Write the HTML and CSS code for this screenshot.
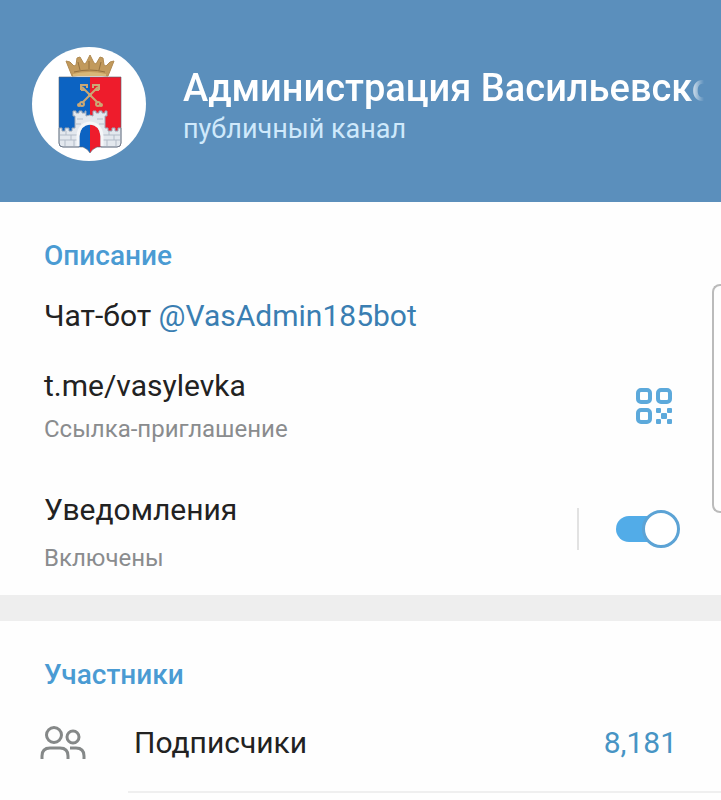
FILE: index.html
```html
<!DOCTYPE html>
<html lang="ru">
<head>
    <meta charset="UTF-8">
    <meta name="viewport" content="width=device-width, initial-scale=1.0">
    <title>Публичный канал</title>
    <link rel="stylesheet" href="styles.css">
</head>
<body>
    <header class="header">
        <svg class="avatar" viewBox="0 0 114 114" aria-hidden="true">
            <circle cx="57" cy="57" r="57" fill="#fff"/>
            <!-- crown -->
            <path d="M40 29 34 14l4 1 4 4 2-1 1-7 3-1 4 7 2-1 4-8 4 8 2 1 4-7 3 1 1 7 2 1 4-4 4-1-6 15q-18-3-36 0z" fill="#c29a5c" stroke="#b08a52" stroke-width="1"/>
            <path d="M42 25q16-4 31 0M46 15l2 8M57 14v8M69 15l-2 8" fill="none" stroke="#94713f" stroke-width="1"/>
            <path d="M41 27q16-4 33 0v2H41z" fill="#d9b878"/>
            <!-- shield -->
            <path d="M27 30h31v76q-2-4-7-6H31q-4 0-4-4z" fill="#0c63c2"/>
            <path d="M58 30h31v66q0 4-4 4H65q-5 2-7 6z" fill="#ee1c2c"/>
            <!-- crossed keys -->
            <g fill="none" stroke="#cba875" stroke-width="2">
                <path d="m50 40 16 16M66 40 50 56"/>
                <circle cx="50" cy="57" r="2"/>
                <circle cx="66" cy="57" r="2"/>
                <path d="M49 43v-5h6v3M49 43h4M67 43v-5h-6v3M67 43h-4"/>
            </g>
            <g fill="#cba875">
                <circle cx="47" cy="58" r="2"/>
                <circle cx="69" cy="58" r="2"/>
                <circle cx="58" cy="48" r="2"/>
            </g>
            <!-- castle wall with an open gate -->
            <path d="M27 81h3v3h3v-3h4v3h3v-3h3V69h-2v-5h3v2h3v-2h3v2h3v-2h1v5q4-2 7 0v-5h3v2h3v-2h3v2h3v-2h2v5h-2v12h3v3h4v-3h3v3h3v-3h3v15q0 4-4 4H69V89q-1-11-11-12-10 1-11 12v11H31q-4 0-4-4z" fill="#e3e8ee" stroke="#9aa6b6" stroke-width="1"/>
            <path d="M28 88h17M28 93h17M71 88h17M71 93h17M34 84v4M39 88v5M33 93v6M42 93v6M77 84v4M82 88v5M75 93v6M84 93v6M45 72h6M65 72h6M44 77h5M67 77h5" stroke="#b3bcc8" stroke-width="1" fill="none"/>
            <path d="M46 99V89q1-12 12-13 11 1 12 13v10" fill="none" stroke="#f5f7f9" stroke-width="3"/>
            <path d="M27 30h62v66q0 4-4 4H65q-5 2-7 6-2-4-7-6H31q-4 0-4-4z" fill="none" stroke="#59606f" stroke-width="1" opacity="0.6"/>
        </svg>
        <div class="title-block">
            <h1 class="title">Администрация Васильевско</h1>
            <p class="subtitle">публичный канал</p>
        </div>
    </header>
    <main>
        <section class="section">
            <h2 class="section-title">Описание</h2>
            <p class="text">Чат-бот <a class="mention" href="#bot">@VasAdmin185bot</a></p>
            <div class="row">
                <div class="row-body">
                    <a class="text" href="#invite">t.me/vasylevka</a>
                    <span class="hint">Ссылка-приглашение</span>
                </div>
                <button class="qr-button" type="button" aria-label="QR-код">
                    <svg width="36" height="36" viewBox="0 0 36 36">
                        <g fill="none" stroke="#5ca9db" stroke-width="4">
                            <rect x="2" y="2" width="12" height="12" rx="3"/>
                            <rect x="22" y="2" width="12" height="12" rx="3"/>
                            <rect x="2" y="22" width="12" height="12" rx="3"/>
                        </g>
                        <g fill="#5ca9db">
                            <rect x="20" y="20" width="5" height="5" rx="1"/>
                            <rect x="31" y="20" width="5" height="5" rx="1"/>
                            <rect x="25" y="25" width="6" height="6" rx="1"/>
                            <rect x="20" y="31" width="5" height="5" rx="1"/>
                            <rect x="31" y="31" width="5" height="5" rx="1"/>
                        </g>
                    </svg>
                </button>
            </div>
            <div class="row row-notify">
                <label class="row-body" for="notifications">
                    <span class="text">Уведомления</span>
                    <span class="hint">Включены</span>
                </label>
                <div class="switch-box">
                    <input class="switch" type="checkbox" id="notifications" checked>
                </div>
            </div>
        </section>
        <section class="section">
            <h2 class="section-title">Участники</h2>
            <a class="member-row" href="#subscribers">
                <svg class="member-icon" width="46" height="34" viewBox="0 0 46 34" fill="none" stroke="#858888" stroke-width="3">
                    <circle cx="14" cy="9" r="7.5"/>
                    <circle cx="33" cy="11" r="6"/>
                    <path d="M2 33v-3q0-8 8-8h10q8 0 8 8v3M30 22h6q8 0 8 8v3"/>
                </svg>
                <span class="text">Подписчики</span>
                <span class="count">8,181</span>
            </a>
        </section>
    </main>
    <div class="edge-handle"></div>
</body>
</html>
```
FILE: styles.css
```css
*, *::before, *::after {
    box-sizing: border-box;
}
body {
    margin: 0;
    font-family: Roboto, "Noto Sans", sans-serif;
    background-color: #fefefe;
    color: #222;
    overflow-x: hidden;
}
h1, h2, p {
    margin: 0;
}
a {
    color: inherit;
    text-decoration: none;
}
.header {
    display: flex;
    gap: 37px;
    padding: 47px 17px 41px 32px;
    background-color: #5b8fbc;
}
.avatar {
    flex: none;
    width: 114px;
    height: 114px;
}
.title-block {
    flex: 1;
    min-width: 0;
    padding-top: 17px;
}
.title {
    overflow: hidden;
    white-space: nowrap;
    font-size: 38px;
    line-height: 48px;
    font-weight: 500;
    color: #fff;
    mask-image: linear-gradient(to left, transparent, #000 16px);
}
.subtitle {
    font-size: 27px;
    line-height: 34px;
    color: #cfe9fb;
}
.section {
    padding: 38px 44px 0;
}
.section + .section {
    border-top: 26px solid #eee;
}
.section-title {
    margin-bottom: 24px;
    font-size: 28px;
    line-height: 32px;
    font-weight: 500;
    color: #4a9bd3;
}
.text {
    font-size: 30px;
    line-height: 40px;
}
.mention {
    color: #3a7eb2;
}
.row {
    display: flex;
    align-items: center;
    justify-content: space-between;
    margin-top: 30px;
}
.row-body {
    display: flex;
    flex-direction: column;
    gap: 7px;
}
.hint {
    font-size: 24px;
    line-height: 32px;
    color: #8a8c8e;
}
.qr-button {
    padding: 0;
    margin-right: 5px;
    border: none;
    background: none;
    cursor: pointer;
}
.qr-button svg {
    display: block;
}
.row-notify {
    margin-top: 45px;
    padding-bottom: 21px;
}
.row-notify .row-body {
    gap: 12px;
}
.switch-box {
    display: flex;
    align-items: center;
    height: 42px;
    padding-left: 37px;
    margin: 0 -4px 6px 0;
    border-left: 2px solid #e2e2e2;
}
.switch {
    appearance: none;
    display: flex;
    align-items: center;
    width: 65px;
    height: 38px;
    margin: 0;
    cursor: pointer;
}
.switch::before {
    content: "";
    flex: none;
    width: 52px;
    height: 26px;
    border-radius: 13px;
    background-color: #bbb;
}
.switch::after {
    content: "";
    flex: none;
    width: 38px;
    height: 38px;
    margin-left: -52px;
    border: 3px solid #bbb;
    border-radius: 50%;
    background-color: #fff;
}
.switch:checked::before {
    background-color: #52ace8;
}
.switch:checked::after {
    margin-left: -26px;
    border-color: #5ca3d5;
}
.member-row {
    display: flex;
    align-items: center;
    margin-top: 32px;
    padding-bottom: 28px;
}
.member-icon {
    flex: none;
    margin: 0 48px 0 -4px;
}
.count {
    margin-left: auto;
    font-size: 30px;
    line-height: 40px;
    color: #4794c4;
}
/* divider under the row, starts at the text */
.section:last-child::after {
    content: "";
    display: block;
    height: 2px;
    margin: 0 -44px 0 84px;
    background-color: #efefef;
}
/* side panel handle on the right edge of the screen */
.edge-handle {
    position: absolute;
    top: 284px;
    right: 0;
    width: 9px;
    height: 229px;
    border: 2px solid #bbb;
    border-right: none;
    border-radius: 8px 0 0 8px;
}
```
